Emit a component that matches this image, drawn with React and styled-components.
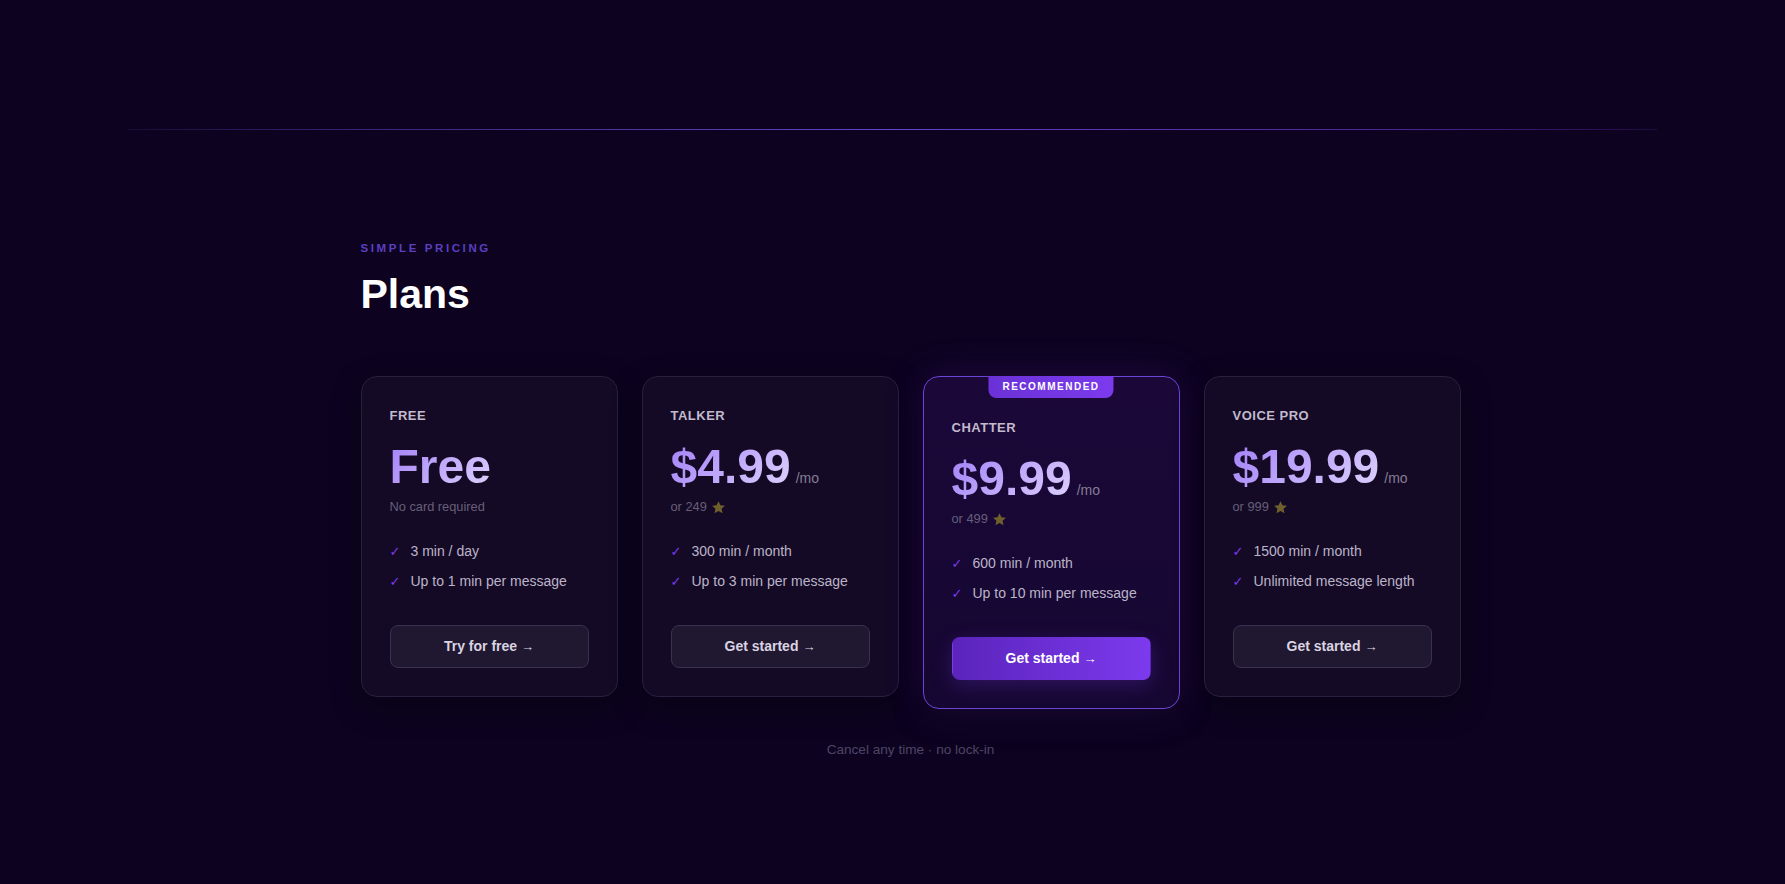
import React from 'react';
import styled, { createGlobalStyle } from 'styled-components';

const GlobalStyle = createGlobalStyle`
    html, body {
        margin : 0;
        padding : 0;
        background : #0d0320;
        font-family : "Liberation Sans", Arial, sans-serif;
    }
`;

const Page = styled.div`
    min-height : 884px;
    background : #0d0320;
    padding-top : 129px;
    box-sizing : border-box;
`;

const Divider = styled.div`
    height : 1px;
    margin : 0 128px;
    background : linear-gradient(90deg, rgba(91,63,192,0.15) 0%, rgba(91,63,192,0.55) 15%, #6244c8 50%, rgba(124,58,237,0.55) 85%, rgba(124,58,237,0.15) 100%);
`;

const Section = styled.section`
    width : 1100px;
    margin : 0 auto;
    padding-top : 112px;
    position : relative;
    left : 18px;
`;

const Eyebrow = styled.div`
    font-size : 11.5px;
    line-height : 13px;
    font-weight : 700;
    letter-spacing : 2.6px;
    color : #5b3fc0;
`;

const Title = styled.h2`
    margin : 16px 0 0;
    font-size : 41px;
    line-height : 46px;
    font-weight : 700;
    color : #ffffff;
`;

const Grid = styled.div`
    margin-top : 59px;
    display : grid;
    grid-template-columns : repeat(4, 257px);
    gap : 24px;
    align-items : start;
`;

const Card = styled.div`
    position : relative;
    box-sizing : border-box;
    border-radius : 16px;
    padding : ${p => (p.$featured ? '43px' : '31px')} 28px 28px;
    background : ${p => (p.$featured ? 'linear-gradient(180deg, #1b0839 0%, #150731 100%)' : '#140a26')};
    border : 1px solid ${p => (p.$featured ? '#6b45d6' : '#291f3e')};
    box-shadow : ${p => (p.$featured
        ? '0 0 40px rgba(124,58,237,0.18), 0 10px 30px rgba(0,0,0,0.35)'
        : '0 10px 30px rgba(0,0,0,0.35)')};
`;

const Badge = styled.div`
    position : absolute;
    top : -1px;
    left : 50%;
    transform : translateX(-50%);
    padding : 0 14px;
    height : 22px;
    line-height : 22px;
    border-radius : 0 0 8px 8px;
    background : linear-gradient(90deg, #6a32d6 0%, #7c3aed 100%);
    color : #ffffff;
    font-size : 10px;
    font-weight : 700;
    letter-spacing : 1.5px;
    white-space : nowrap;
`;

const PlanName = styled.div`
    font-size : 13px;
    line-height : 16px;
    font-weight : 700;
    letter-spacing : 0.5px;
    color : #c2bacd;
`;

const PriceRow = styled.div`
    margin-top : 19px;
    display : flex;
    align-items : baseline;
    gap : 5px;
`;

const Price = styled.span`
    font-size : 48px;
    line-height : 48px;
    font-weight : 700;
    background : linear-gradient(135deg, #a482f8 0%, #ddd2fd 100%);
    -webkit-background-clip : text;
    background-clip : text;
    color : transparent;
`;

const Period = styled.span`
    font-size : 14px;
    color : #857d94;
`;

const Sub = styled.div`
    margin-top : 7px;
    font-size : 12.8px;
    line-height : 18px;
    color : #675f78;
    display : flex;
    align-items : center;
`;

const Star = styled.svg`
    width : 15px;
    height : 15px;
    margin-left : 4px;
`;

const Features = styled.ul`
    list-style : none;
    margin : 25px 0 0;
    padding : 0;
    display : flex;
    flex-direction : column;
    gap : 10px;
`;

const Feature = styled.li`
    display : flex;
    align-items : flex-start;
    font-size : 14px;
    line-height : 20px;
    color : #bcb4c8;
    .check{
        width : 21px;
        flex : none;
        font-size : 13px;
        line-height : 20px;
        font-weight : 700;
        color : #7c3aed;
        font-family : "DejaVu Sans", sans-serif;
        position : relative;
        top : 1px;
    }
`;

const Button = styled.button`
    margin-top : 34px;
    width : 100%;
    box-sizing : border-box;
    padding : 12px 0;
    line-height : 17px;
    border-radius : 8px;
    font-family : "Liberation Sans", Arial, sans-serif;
    font-size : 14px;
    font-weight : 700;
    cursor : pointer;
    color : ${p => (p.$primary ? '#ffffff' : '#d9d3e2')};
    background : ${p => (p.$primary ? 'linear-gradient(90deg, #5b24bc 0%, #7c3aed 100%)' : '#201830')};
    border : 1px solid ${p => (p.$primary ? 'transparent' : '#3a3050')};
    box-shadow : ${p => (p.$primary ? '0 6px 20px rgba(124,58,237,0.25)' : 'none')};
    .arrow{
        font-weight : 400;
        font-size : 13px;
        margin-left : 4px;
    }
`;

const Note = styled.p`
    margin : 33px 0 0;
    text-align : center;
    font-size : 13.6px;
    line-height : 16px;
    color : #4e4566;
`;

const plans = [
    {name : 'FREE', price : 'Free', sub : 'No card required', features : ['3 min / day', 'Up to 1 min per message'], cta : 'Try for free'},
    {name : 'TALKER', price : '$4.99', per : '/mo', stars : 249, features : ['300 min / month', 'Up to 3 min per message'], cta : 'Get started'},
    {name : 'CHATTER', price : '$9.99', per : '/mo', stars : 499, features : ['600 min / month', 'Up to 10 min per message'], cta : 'Get started', featured : true},
    {name : 'VOICE PRO', price : '$19.99', per : '/mo', stars : 999, features : ['1500 min / month', 'Unlimited message length'], cta : 'Get started'},
];

const StarIcon = () => (
    <Star viewBox="0 0 24 24">
        <path d="M12 1.8l3.1 6.6 7.2.8-5.4 4.9 1.5 7.1L12 17.6l-6.4 3.6 1.5-7.1L1.7 9.2l7.2-.8z" fill="#6f5f2c" />
    </Star>
);

const App = () => {
    return (
        <>
            <GlobalStyle />
            <Page>
                <Divider />
                <Section>
                    <Eyebrow>SIMPLE PRICING</Eyebrow>
                    <Title>Plans</Title>
                    <Grid>
                        {plans.map(plan => (
                            <Card key={plan.name} $featured={plan.featured}>
                                {plan.featured && <Badge>RECOMMENDED</Badge>}
                                <PlanName>{plan.name}</PlanName>
                                <PriceRow>
                                    <Price>{plan.price}</Price>
                                    {plan.per && <Period>{plan.per}</Period>}
                                </PriceRow>
                                <Sub>
                                    {plan.sub ? plan.sub : <>or {plan.stars}<StarIcon /></>}
                                </Sub>
                                <Features>
                                    {plan.features.map(f => (
                                        <Feature key={f}>
                                            <span className="check">✓</span>
                                            {f}
                                        </Feature>
                                    ))}
                                </Features>
                                <Button $primary={plan.featured}>
                                    {plan.cta}<span className="arrow">→</span>
                                </Button>
                            </Card>
                        ))}
                    </Grid>
                    <Note>Cancel any time · no lock-in</Note>
                </Section>
            </Page>
        </>
    );
};

export default App;
